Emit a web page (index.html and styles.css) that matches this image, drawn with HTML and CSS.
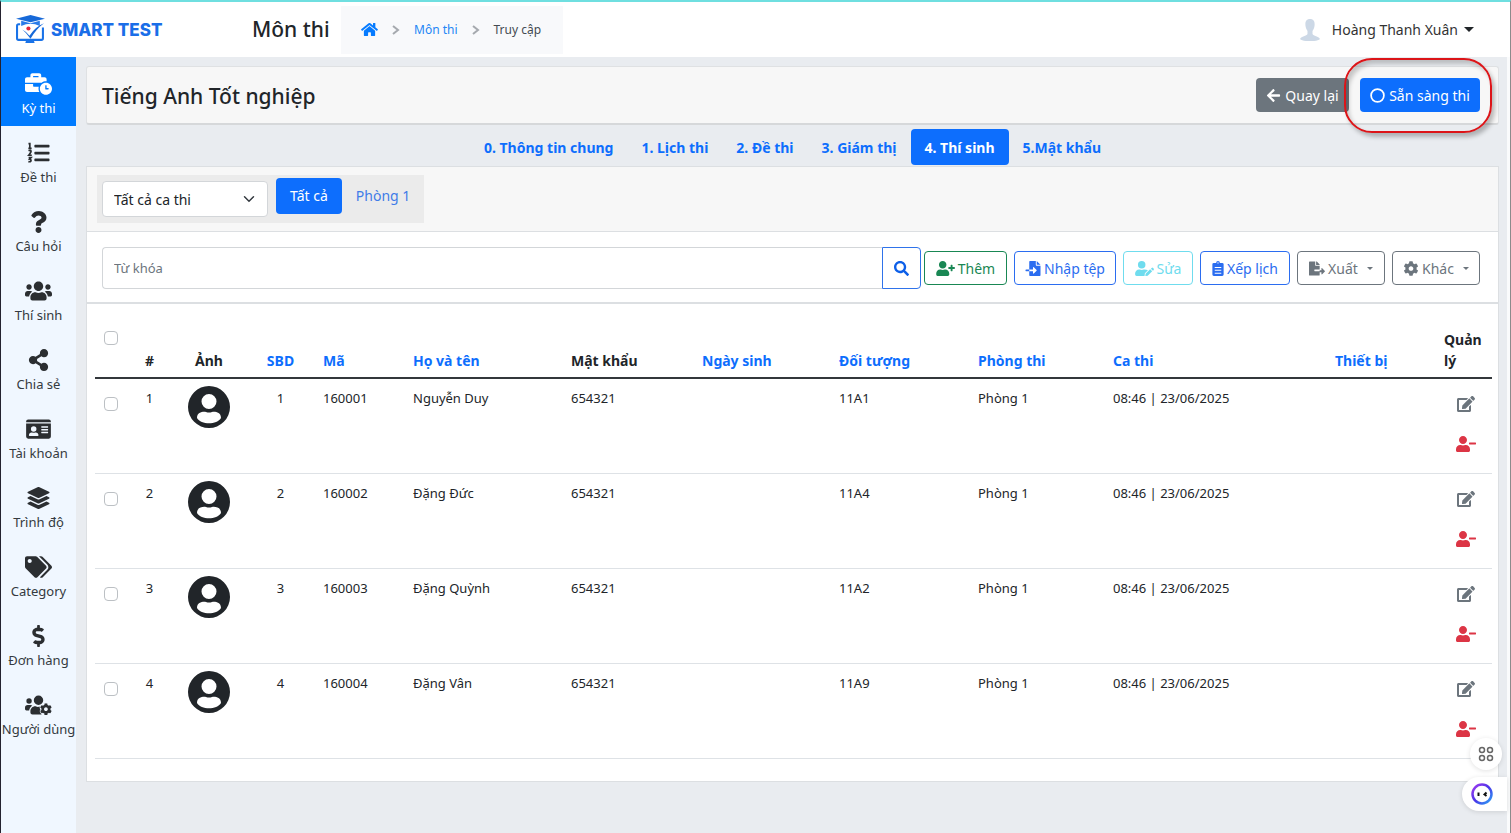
FILE: index.html
```html
<!DOCTYPE html>
<html lang="vi">
<head>
<meta charset="utf-8">
<title>Smart Test - Môn thi</title>
<link rel="stylesheet" href="styles.css">
</head>
<body>
<svg class="sprite" aria-hidden="true">
  <symbol id="i-home" viewBox="0 0 576 512"><path d="M280.37 148.26L96 300.11V464a16 16 0 0 0 16 16l112.06-.29a16 16 0 0 0 15.92-16V368a16 16 0 0 1 16-16h64a16 16 0 0 1 16 16v95.64a16 16 0 0 0 16 16.05L464 480a16 16 0 0 0 16-16V300L295.67 148.26a12.19 12.19 0 0 0-15.3 0zM571.6 251.47L488 182.56V44.05a12 12 0 0 0-12-12h-56a12 12 0 0 0-12 12v72.61L318.47 43a48 48 0 0 0-61 0L4.34 251.47a12 12 0 0 0-1.6 16.9l25.5 31A12 12 0 0 0 45.15 301l235.22-193.74a12.19 12.19 0 0 1 15.3 0L530.9 301a12 12 0 0 0 16.9-1.6l25.5-31a12 12 0 0 0-1.7-16.93z"/></symbol>
  <symbol id="i-business" viewBox="0 0 640 512"><path d="M496 224c-79.59 0-144 64.41-144 144s64.41 144 144 144 144-64.41 144-144-64.41-144-144-144zm64 150.29c0 5.34-4.37 9.71-9.71 9.71h-60.57c-5.34 0-9.71-4.37-9.71-9.71v-76.57c0-5.34 4.37-9.71 9.71-9.71h12.57c5.34 0 9.71 4.37 9.71 9.71V352h38.29c5.34 0 9.71 4.37 9.71 9.71v12.58zM496 192c5.4 0 10.72.33 16 .81V144c0-25.6-22.4-48-48-48h-80V48c0-25.6-22.4-48-48-48H176c-25.6 0-48 22.4-48 48v48H48c-25.6 0-48 22.4-48 48v80h395.12c28.6-20.09 63.35-32 100.88-32zM320 96H192V64h128v32zm6.82 224H208c-8.84 0-16-7.16-16-16v-48H0v144c0 25.6 22.4 48 48 48h291.43C327.1 423.96 320 396.82 320 368c0-16.66 2.48-32.72 6.82-48z"/></symbol>
  <symbol id="i-list" viewBox="0 0 512 512"><path d="M176 64h320a16 16 0 0 1 16 16v32a16 16 0 0 1-16 16H176a16 16 0 0 1-16-16V80a16 16 0 0 1 16-16zm0 160h320a16 16 0 0 1 16 16v32a16 16 0 0 1-16 16H176a16 16 0 0 1-16-16v-32a16 16 0 0 1 16-16zm0 160h320a16 16 0 0 1 16 16v32a16 16 0 0 1-16 16H176a16 16 0 0 1-16-16v-32a16 16 0 0 1 16-16z"/><path fill="none" stroke="currentColor" stroke-width="40" d="M22 40h32v102M20 146h76M24 206q46-24 58 4 8 22-52 98h70M26 362h56l-32 36q34 4 32 34-4 38-62 24"/></symbol>
  <symbol id="i-question" viewBox="0 0 384 512"><path d="M202.021 0C122.202 0 70.503 32.703 29.914 91.026c-7.363 10.58-5.093 25.086 5.178 32.874l43.138 32.709c10.373 7.865 25.132 6.026 33.253-4.148 25.049-31.381 43.63-49.449 82.757-49.449 30.764 0 68.816 19.799 68.816 49.631 0 22.552-18.617 34.134-48.993 51.164-35.423 19.86-82.299 44.576-82.299 106.405V320c0 13.255 10.745 24 24 24h72.471c13.255 0 24-10.745 24-24v-5.773c0-42.86 125.268-44.645 125.268-160.627C377.504 66.256 286.902 0 202.021 0zM192 373.459c-38.196 0-69.271 31.075-69.271 69.271 0 38.195 31.075 69.27 69.271 69.27s69.271-31.075 69.271-69.271-31.075-69.27-69.271-69.27z"/></symbol>
  <symbol id="i-users" viewBox="0 0 640 512"><path d="M96 224c35.3 0 64-28.7 64-64s-28.7-64-64-64-64 28.7-64 64 28.7 64 64 64zm448 0c35.3 0 64-28.7 64-64s-28.7-64-64-64-64 28.7-64 64 28.7 64 64 64zm32 32h-64c-17.6 0-33.5 7.1-45.1 18.6 40.3 22.1 68.9 62 75.1 109.4h66c17.7 0 32-14.3 32-32v-32c0-35.3-28.7-64-64-64zm-256 0c61.9 0 112-50.1 112-112S381.9 32 320 32 208 82.1 208 144s50.1 112 112 112zm76.8 32h-8.3c-20.8 10-43.9 16-68.5 16s-47.6-6-68.5-16h-8.3C179.6 288 128 339.6 128 403.2V432c0 26.5 21.5 48 48 48h288c26.5 0 48-21.5 48-48v-28.8c0-63.6-51.6-115.2-115.2-115.2zm-223.7-13.4C161.5 263.1 145.6 256 128 256H64c-35.3 0-64 28.7-64 64v32c0 17.7 14.3 32 32 32h65.9c6.3-47.4 34.9-87.3 75.2-109.4z"/></symbol>
  <symbol id="i-share" viewBox="0 0 448 512"><path d="M352 320c-22.608 0-43.387 7.819-59.79 20.895l-102.486-64.054a96.551 96.551 0 0 0 0-41.683l102.486-64.054C308.613 184.181 329.392 192 352 192c53.019 0 96-42.981 96-96S405.019 0 352 0s-96 42.981-96 96c0 7.158.79 14.13 2.276 20.841L155.79 180.895C139.387 167.819 118.608 160 96 160c-53.019 0-96 42.981-96 96s42.981 96 96 96c22.608 0 43.387-7.819 59.79-20.895l102.486 64.054A96.301 96.301 0 0 0 256 416c0 53.019 42.981 96 96 96s96-42.981 96-96-42.981-96-96-96z"/></symbol>
  <symbol id="i-card" viewBox="0 0 576 512"><path fill-rule="evenodd" d="M48 32h480a48 48 0 0 1 48 48v16H0V80a48 48 0 0 1 48-48zM0 128h576v304a48 48 0 0 1-48 48H48a48 48 0 0 1-48-48zM176 192a64 64 0 1 0 0 128 64 64 0 1 0 0-128zM64 403c0 7 7 13 16 13h192c9 0 16-6 16-13 0-37-28-67-64-67h-11a96 96 0 0 1-74 0h-11c-36 0-64 30-64 67zM352 200v16q0 8 8 8h144q8 0 8-8v-16q0-8-8-8H360q-8 0-8 8zM352 264v16q0 8 8 8h144q8 0 8-8v-16q0-8-8-8H360q-8 0-8 8zM352 328v16q0 8 8 8h144q8 0 8-8v-16q0-8-8-8H360q-8 0-8 8z"/></symbol>
  <symbol id="i-layers" viewBox="0 0 512 512"><path d="M12.41 148.02l232.94 105.67c6.8 3.09 14.49 3.09 21.29 0l232.94-105.67c16.55-7.51 16.55-32.52 0-40.03L266.65 2.31a25.607 25.607 0 0 0-21.29 0L12.41 107.98c-16.55 7.51-16.55 32.53 0 40.04zm487.18 88.28l-58.09-26.33-161.64 73.27c-7.56 3.43-15.59 5.17-23.86 5.17s-16.29-1.74-23.86-5.17L70.51 209.97l-58.1 26.33c-16.55 7.5-16.55 32.5 0 40l232.94 105.59c6.8 3.08 14.49 3.08 21.29 0L499.59 276.3c16.55-7.5 16.55-32.5 0-40zm0 127.8l-57.87-26.23-161.86 73.37c-7.56 3.43-15.59 5.17-23.86 5.17s-16.29-1.74-23.86-5.17L70.29 337.87 12.41 364.1c-16.55 7.5-16.55 32.5 0 40l232.94 105.59c6.8 3.08 14.49 3.08 21.29 0L499.59 404.1c16.55-7.5 16.55-32.5 0-40z"/></symbol>
  <symbol id="i-tags" viewBox="0 0 640 512"><path d="M497.941 225.941L286.059 14.059A48 48 0 0 0 252.118 0H48C21.49 0 0 21.49 0 48v204.118a48 48 0 0 0 14.059 33.941l211.882 211.882c18.744 18.745 49.136 18.746 67.882 0l204.118-204.118c18.745-18.745 18.745-49.137 0-67.882zM112 160c-26.51 0-48-21.49-48-48s21.49-48 48-48 48 21.49 48 48-21.49 48-48 48zm513.941 133.823L421.823 497.941c-18.745 18.745-49.137 18.745-67.882 0l-.36-.36L527.64 323.522c16.999-16.999 26.36-39.6 26.36-63.64s-9.362-46.641-26.36-63.64L331.397 0h48.721a48 48 0 0 1 33.941 14.059l211.882 211.882c18.745 18.745 18.745 49.137 0 67.882z"/></symbol>
  <symbol id="i-dollar" viewBox="0 0 288 512"><path d="M209.2 233.4l-108-31.6C88.7 198.2 80 186.5 80 173.5c0-16.3 13.2-29.5 29.5-29.5h66.3c12.2 0 24.2 3.7 34.2 10.5 6.1 4.1 14.3 3.1 19.5-2l34.8-34c7.1-6.9 6.1-18.4-1.8-24.5C238 74.8 207.4 64.1 176 64V16c0-8.800-7.2-16-16-16h-32c-8.800 0-16 7.200-16 16v48h-2.500C45.800 64-5.400 118.700.500 183.600c4.200 46.100 39.400 83.600 83.800 96.600l102.500 30c12.500 3.700 21.200 15.300 21.200 28.300 0 16.300-13.200 29.500-29.500 29.500h-66.300C100 368 88 364.300 78 357.500c-6.100-4.100-14.300-3.100-19.500 2l-34.800 34c-7.100 6.900-6.100 18.400 1.800 24.500 24.500 19.200 55.100 29.900 86.500 30v48c0 8.800 7.200 16 16 16h32c8.800 0 16-7.200 16-16v-48.200c46.600-.9 90.300-28.600 105.700-72.700 21.500-61.600-14.600-124.800-72.500-141.700z"/></symbol>
  <symbol id="i-cog" viewBox="0 0 512 512"><path d="M487.4 315.7l-42.6-24.6c4.3-23.2 4.3-47 0-70.2l42.6-24.6c4.9-2.8 7.1-8.6 5.5-14-11.1-35.6-30-67.8-54.7-94.600-3.800-4.100-10-5.100-14.800-2.300L380.800 110c-17.900-15.400-38.500-27.300-60.800-35.100V25.800c0-5.600-3.900-10.500-9.400-11.700-36.700-8.200-74.300-7.800-109.200 0-5.500 1.200-9.400 6.100-9.400 11.700V75c-22.200 7.900-42.800 19.800-60.800 35.100L88.700 85.500c-4.900-2.800-11-1.900-14.800 2.300-24.700 26.700-43.600 58.900-54.700 94.600-1.700 5.400.6 11.200 5.500 14L67.300 221c-4.300 23.200-4.300 47 0 70.200l-42.600 24.600c-4.900 2.800-7.100 8.600-5.500 14 11.100 35.600 30 67.800 54.700 94.600 3.800 4.100 10 5.100 14.800 2.300l42.600-24.600c17.900 15.400 38.500 27.300 60.800 35.100v49.200c0 5.600 3.900 10.500 9.400 11.700 36.700 8.200 74.300 7.800 109.200 0 5.500-1.200 9.400-6.100 9.400-11.700v-49.200c22.200-7.900 42.800-19.800 60.800-35.100l42.600 24.600c4.900 2.800 11 1.900 14.800-2.300 24.700-26.700 43.600-58.900 54.700-94.600 1.500-5.500-.7-11.300-5.600-14.100zM256 336c-44.100 0-80-35.900-80-80s35.900-80 80-80 80 35.900 80 80-35.900 80-80 80z"/></symbol>
  <symbol id="i-search" viewBox="0 0 512 512"><path d="M505 442.7L405.3 343c-4.500-4.500-10.600-7-17-7H372c27.600-35.300 44-79.700 44-128C416 93.100 322.900 0 208 0S0 93.100 0 208s93.100 208 208 208c48.300 0 92.700-16.400 128-44v16.300c0 6.400 2.500 12.500 7 17l99.700 99.700c9.400 9.400 24.600 9.400 33.900 0l28.300-28.300c9.400-9.400 9.400-24.600.1-34zM208 336c-70.700 0-128-57.200-128-128 0-70.700 57.200-128 128-128 70.700 0 128 57.200 128 128 0 70.700-57.200 128-128 128z"/></symbol>
  <symbol id="i-userbody" viewBox="0 0 640 512"><path d="M224 256c70.7 0 128-57.3 128-128S294.7 0 224 0 96 57.3 96 128s57.3 128 128 128zm89.6 32h-16.7c-22.2 10.2-46.9 16-72.9 16s-50.6-5.800-72.900-16h-16.700C60.200 288 0 348.200 0 422.400V464c0 26.500 21.500 48 48 48h352c26.500 0 48-21.500 48-48v-41.600c0-74.200-60.200-134.400-134.400-134.400z"/></symbol>
  <symbol id="i-userplus" viewBox="0 0 640 512"><use href="#i-userbody"/><path d="M624 208h-64v-64c0-8.800-7.200-16-16-16h-32c-8.800 0-16 7.200-16 16v64h-64c-8.800 0-16 7.200-16 16v32c0 8.800 7.200 16 16 16h64v64c0 8.800 7.200 16 16 16h32c8.800 0 16-7.200 16-16v-64h64c8.800 0 16-7.200 16-16v-32c0-8.800-7.200-16-16-16z"/></symbol>
  <symbol id="i-userminus" viewBox="0 0 640 512"><use href="#i-userbody"/><path d="M624 208H432c-8.800 0-16 7.200-16 16v32c0 8.800 7.200 16 16 16h192c8.800 0 16-7.200 16-16v-32c0-8.800-7.200-16-16-16z"/></symbol>
  <symbol id="i-useredit" viewBox="0 0 640 512"><path d="M224 256a128 128 0 1 0 0-256 128 128 0 0 0 0 256zm90 32h-17a174 174 0 0 1-146 0h-17C60 288 0 348 0 422v42a48 48 0 0 0 48 48h274l11-95 104-104c-30-17-70-25-123-25z"/><path d="M358 434l-8 68q0 12 11 10l68-8 153-153-71-71zM633 260l-33-33q-12-10-24 0l-38 38 71 71 25-26q15-25-1-50z"/></symbol>
  <symbol id="i-userscog" viewBox="0 0 640 512"><circle cx="96" cy="160" r="64"/><path d="M173 275C161 263 146 256 128 256H64a64 64 0 0 0-64 64v32a32 32 0 0 0 32 32h66c6-47 35-87 75-109z"/><path d="M320 256a112 112 0 1 0 0-224 112 112 0 0 0 0 224zm26 36q-40 20-94-4h-9c-63 0-115 52-115 115v29a48 48 0 0 0 48 48h220q-20-20-26-34-22-20-20-52 4-18 14-28-18-34-18-74z"/><svg x="352" y="212" width="288" height="288" viewBox="0 0 512 512"><use href="#i-cog"/></svg></symbol>
  <symbol id="i-edit" viewBox="0 0 576 512"><path d="M402.600 83.200l90.200 90.200c3.800 3.800 3.800 10 0 13.800L274.400 405.600l-92.800 10.300c-12.400 1.400-22.900-9.100-21.500-21.500l10.300-92.800L388.800 83.200c3.800-3.800 10-3.800 13.800 0zm162-22.900l-48.800-48.800c-15.200-15.200-39.900-15.200-55.200 0l-35.400 35.400c-3.800 3.800-3.800 10 0 13.800l90.200 90.200c3.800 3.800 10 3.800 13.800 0l35.400-35.400c15.200-15.300 15.200-40 0-55.200zM384 346.200V448H64V128h229.800c3.200 0 6.200-1.300 8.500-3.500l40-40c7.600-7.600 2.200-20.500-8.500-20.500H48C21.500 64 0 85.500 0 112v352c0 26.500 21.500 48 48 48h352c26.500 0 48-21.500 48-48V306.200c0-10.700-12.900-16-20.500-8.500l-40 40c-2.200 2.300-3.500 5.300-3.500 8.500z"/></symbol>
  <symbol id="i-back" viewBox="0 0 448 512"><path d="M257.500 445.100l-22.200 22.200c-9.400 9.400-24.600 9.400-33.900 0L7 273c-9.400-9.400-9.400-24.600 0-33.900L201.400 44.700c9.400-9.400 24.600-9.400 33.900 0l22.200 22.200c9.500 9.500 9.300 25-.4 34.300L136.600 216H424c13.300 0 24 10.700 24 24v32c0 13.300-10.700 24-24 24H136.600l120.500 114.800c9.800 9.300 10 24.800.4 34.300z"/></symbol>
  <symbol id="i-circle" viewBox="0 0 512 512"><path fill-rule="evenodd" d="M256 8a248 248 0 1 0 0 496 248 248 0 1 0 0-496zm0 60a188 188 0 1 1 0 376 188 188 0 1 1 0-376z"/></symbol>
  <symbol id="i-import" viewBox="0 0 512 512"><path fill-rule="evenodd" d="M16 288a16 16 0 0 0-16 16v32a16 16 0 0 0 16 16h112v-64zM384 0v128h128zM352 0H152a24 24 0 0 0-24 24v264h128v-65c0-14 17-21 27-11l95 96q8 12 0 24l-95 96c-10 10-27 3-27-12v-64H128v136a24 24 0 0 0 24 24h336a24 24 0 0 0 24-24V160H376a24 24 0 0 1-24-24z"/></symbol>
  <symbol id="i-export" viewBox="0 0 576 512"><path d="M384 121q0-10-7-17L280 7q-7-7-17-7h-7v128h128zm187 222l-95-96c-10-10-28-3-28 11v65h-64v64h64v65c0 14 18 21 28 11l95-96q10-12 0-24zM192 336v-32a16 16 0 0 1 16-16h176V160H248a24 24 0 0 1-24-24V0H24A24 24 0 0 0 0 24v464a24 24 0 0 0 24 24h336a24 24 0 0 0 24-24V352H208a16 16 0 0 1-16-16z"/></symbol>
  <symbol id="i-clipboard" viewBox="0 0 384 512"><path fill-rule="evenodd" d="M336 64h-80a64 64 0 0 0-128 0H48a48 48 0 0 0-48 48v352a48 48 0 0 0 48 48h288a48 48 0 0 0 48-48V112a48 48 0 0 0-48-48zM192 40a24 24 0 1 1 0 48 24 24 0 1 1 0-48zM80 205h224v34H80zM80 301h224v34H80zM80 397h224v34H80z"/></symbol>
  <symbol id="i-avatar" viewBox="0 0 42 42"><path fill-rule="evenodd" d="M21 0a21 21 0 1 0 0 42 21 21 0 1 0 0-42zm0 8a7.500 7.500 0 1 1 0 15 7.500 7.500 0 1 1 0-15zM9 32c0-6 6-6.500 9-6q3 1 6 0c3-.5 9 0 9 6-4 7-20 7-24 0z"/></symbol>
</svg>

<header class="topbar">
  <a class="brand" href="#">
    <svg class="brand-mark" viewBox="0 0 28 28" aria-hidden="true">
      <path d="M0 3.500 14 0l14 3.500L14 7z" fill="#1769d8"/><path d="M5 5.500v5q9-4 18 0v-5L14 8z" fill="#2a7be8"/>
      <path d="M4 9H2.500Q1 9 1 10.500v12Q1 24 2.500 24h22q1.500 0 1.500-1.500V12" fill="none" stroke="#1a73e8" stroke-width="2"/>
      <path d="M10 24h7l1 3H9z" fill="#1a73e8"/>
      <path d="M6 14q4 2 7 6 6-9 14-12-8 6-13 15Q10 17 6 14z" fill="#1769d8"/>
      <circle cx="12" cy="13" r="2" fill="#e5283b"/>
    </svg>
    <span>SMART TEST</span>
  </a>
  <h1 class="page-name">Môn thi</h1>
  <nav class="crumbs" aria-label="Breadcrumb">
    <a href="#" aria-label="Trang chủ"><svg class="home"><use href="#i-home"/></svg></a>
    <svg class="chev" viewBox="0 0 8 10"><path d="M1 1l5 4-5 4"/></svg>
    <a href="#">Môn thi</a>
    <svg class="chev" viewBox="0 0 8 10"><path d="M1 1l5 4-5 4"/></svg>
    <span>Truy cập</span>
  </nav>
  <button class="account" type="button">
    <svg class="face" viewBox="0 0 20 22" aria-hidden="true"><path d="M10 0c4 0 5 3 4.500 7-.5 3-1.500 4-2 5v3c1 2 6 2 7.500 5-3 3-17 3-20 0 1.500-3 6.500-3 7.500-5v-3c-.5-1-1.500-2-2-5C5 3 6 0 10 0z"/></svg>
    <span>Hoàng Thanh Xuân</span>
    <i class="caret big"></i>
  </button>
</header>

<div class="shell">
  <nav class="side" aria-label="Menu">
    <a class="on" href="#"><svg><use href="#i-business"/></svg>Kỳ thi</a>
    <a href="#"><svg><use href="#i-list"/></svg>Đề thi</a>
    <a href="#"><svg><use href="#i-question"/></svg>Câu hỏi</a>
    <a href="#"><svg><use href="#i-users"/></svg>Thí sinh</a>
    <a href="#"><svg><use href="#i-share"/></svg>Chia sẻ</a>
    <a href="#"><svg><use href="#i-card"/></svg>Tài khoản</a>
    <a href="#"><svg><use href="#i-layers"/></svg>Trình độ</a>
    <a href="#"><svg><use href="#i-tags"/></svg>Category</a>
    <a href="#"><svg><use href="#i-dollar"/></svg>Đơn hàng</a>
    <a href="#"><svg><use href="#i-userscog"/></svg>Người dùng</a>
  </nav>

  <main class="main">
    <section class="titlebar">
      <h2>Tiếng Anh Tốt nghiệp</h2>
      <button class="btn grey" type="button"><svg><use href="#i-back"/></svg>Quay lại</button>
      <div class="ready">
        <button class="btn blue" type="button"><svg><use href="#i-circle"/></svg>Sẵn sàng thi</button>
        <span class="ring"></span>
      </div>
    </section>

    <nav class="tabs" aria-label="Các bước">
      <a href="#">0. Thông tin chung</a>
      <a href="#">1. Lịch thi</a>
      <a href="#">2. Đề thi</a>
      <a href="#">3. Giám thị</a>
      <a class="on" href="#">4. Thí sinh</a>
      <a href="#">5.Mật khẩu</a>
    </nav>

    <section class="card">
      <div class="filters">
        <div class="filter-box">
          <select aria-label="Ca thi"><option>Tất cả ca thi</option></select>
          <a class="room on" href="#">Tất cả</a>
          <a class="room" href="#">Phòng 1</a>
        </div>
      </div>
      <div class="tools">
        <form class="search">
          <input type="text" placeholder="Từ khóa" aria-label="Từ khóa">
          <button type="button" aria-label="Tìm"><svg><use href="#i-search"/></svg></button>
        </form>
        <div class="actions">
          <button class="out green w-add" type="button"><svg class="wide"><use href="#i-userplus"/></svg>Thêm</button>
          <button class="out prim w-import" type="button"><svg><use href="#i-import"/></svg>Nhập tệp</button>
          <button class="out cyan w-edit" type="button" disabled><svg class="wide"><use href="#i-useredit"/></svg>Sửa</button>
          <button class="out prim w-plan" type="button"><svg class="slim"><use href="#i-clipboard"/></svg>Xếp lịch</button>
          <button class="out sec w-menu" type="button"><svg><use href="#i-export"/></svg>Xuất<i class="caret"></i></button>
          <button class="out sec w-menu" type="button"><svg><use href="#i-cog"/></svg>Khác<i class="caret"></i></button>
        </div>
      </div>

      <div class="table-wrap">
        <table>
          <colgroup><col class="c-check"><col class="c-no"><col class="c-img"><col class="c-sbd"><col class="c-code"><col class="c-name"><col class="c-pass"><col class="c-dob"><col class="c-group"><col class="c-room"><col><col class="c-device"><col class="c-manage"></colgroup>
          <thead>
            <tr><th class="pick"><input type="checkbox" aria-label="Chọn tất cả"></th><th class="mid">#</th><th class="mid">Ảnh</th><th class="mid"><a href="#">SBD</a></th><th><a href="#">Mã</a></th><th><a href="#">Họ và tên</a></th><th>Mật khẩu</th><th><a href="#">Ngày sinh</a></th><th><a href="#">Đối tượng</a></th><th><a href="#">Phòng thi</a></th><th><a href="#">Ca thi</a></th><th><a href="#">Thiết bị</a></th><th>Quản lý</th></tr>
          </thead>
          <tbody>
            <tr><td class="pick"><input type="checkbox" aria-label="Chọn 160001"></td><td class="mid">1</td><td class="mid"><svg class="avatar"><use href="#i-avatar"/></svg></td><td class="mid">1</td><td>160001</td><td>Nguyễn Duy</td><td>654321</td><td></td><td>11A1</td><td>Phòng 1</td><td>08:46 | 23/06/2025</td><td></td><td><div class="manage"><button type="button" aria-label="Sửa"><svg><use href="#i-edit"/></svg></button><button class="del" type="button" aria-label="Xóa"><svg><use href="#i-userminus"/></svg></button></div></td></tr>
            <tr><td class="pick"><input type="checkbox" aria-label="Chọn 160002"></td><td class="mid">2</td><td class="mid"><svg class="avatar"><use href="#i-avatar"/></svg></td><td class="mid">2</td><td>160002</td><td>Đặng Đức</td><td>654321</td><td></td><td>11A4</td><td>Phòng 1</td><td>08:46 | 23/06/2025</td><td></td><td><div class="manage"><button type="button" aria-label="Sửa"><svg><use href="#i-edit"/></svg></button><button class="del" type="button" aria-label="Xóa"><svg><use href="#i-userminus"/></svg></button></div></td></tr>
            <tr><td class="pick"><input type="checkbox" aria-label="Chọn 160003"></td><td class="mid">3</td><td class="mid"><svg class="avatar"><use href="#i-avatar"/></svg></td><td class="mid">3</td><td>160003</td><td>Đặng Quỳnh</td><td>654321</td><td></td><td>11A2</td><td>Phòng 1</td><td>08:46 | 23/06/2025</td><td></td><td><div class="manage"><button type="button" aria-label="Sửa"><svg><use href="#i-edit"/></svg></button><button class="del" type="button" aria-label="Xóa"><svg><use href="#i-userminus"/></svg></button></div></td></tr>
            <tr><td class="pick"><input type="checkbox" aria-label="Chọn 160004"></td><td class="mid">4</td><td class="mid"><svg class="avatar"><use href="#i-avatar"/></svg></td><td class="mid">4</td><td>160004</td><td>Đặng Vân</td><td>654321</td><td></td><td>11A9</td><td>Phòng 1</td><td>08:46 | 23/06/2025</td><td></td><td><div class="manage"><button type="button" aria-label="Sửa"><svg><use href="#i-edit"/></svg></button><button class="del" type="button" aria-label="Xóa"><svg><use href="#i-userminus"/></svg></button></div></td></tr>
          </tbody>
        </table>
      </div>
    </section>
  </main>
</div>

<div class="floating">
  <button class="apps" type="button" aria-label="Ứng dụng"><svg viewBox="0 0 16 16"><circle cx="4" cy="4" r="2.500"/><circle cx="12" cy="4" r="2.500"/><circle cx="4" cy="12" r="2.500"/><circle cx="12" cy="12" r="2.500"/></svg></button>
  <button class="bot" type="button" aria-label="Trợ lý">
    <svg viewBox="0 0 22 22"><defs><linearGradient id="g" x1="0" y1="0" x2="1" y2="1"><stop offset="0" stop-color="#a23bf0"/><stop offset=".5" stop-color="#4a35e8"/><stop offset="1" stop-color="#2aa5f5"/></linearGradient></defs><circle cx="11" cy="11" r="9.500" fill="#fff" stroke="url(#g)" stroke-width="2.500"/><path d="M7.500 9.500v3.500M15.500 9.500l-2 2 2 1.500" fill="none" stroke="#111" stroke-width="2"/></svg>
  </button>
</div>
</body>
</html>
```
FILE: styles.css
```css
* { box-sizing: border-box; }
body {
  margin: 0;
  min-height: 100vh;
  display: flex;
  flex-direction: column;
  background: #e9ecf0;
  border-left: 1px solid #24222f;
  border-right: 1px solid #8b8b8b;
  border-top: 2px solid #6fdfe0;
  color: #212529;
  font: 13px/21px "Noto Sans", "Open Sans", sans-serif;
}
a { color: #0d6efd; text-decoration: none; }
button, input, select { font: inherit; }
button { cursor: pointer; }
svg { fill: currentColor; flex: none; }
.sprite { position: absolute; width: 0; height: 0; }

.topbar {
  display: flex;
  align-items: center;
  height: 55px;
  background: #fff;
  padding-left: 15px;
  padding-right: 36px;
}
.brand { display: flex; align-items: center; gap: 6px; width: 236px; color: #1a6ee8; font: 800 17px/22px "Inter", sans-serif; }
.brand-mark { width: 29px; height: 29px; }
.page-name { margin: 0; width: 89px; padding-bottom: 2px; font-size: 21px; line-height: 28px; font-weight: 500; white-space: nowrap; }
.crumbs { display: flex; align-items: center; gap: 14px; height: 48px; padding: 0 22px 0 20px; background: #f8f9fb; font-size: 12px; color: #444b52; }
.crumbs a { display: flex; color: #2487f5; }
.home { width: 17px; height: 15px; color: #067bff; }
.chev { width: 8px; height: 10px; fill: none; stroke: #a5a9ae; stroke-width: 2; }
.account { margin-left: auto; display: flex; align-items: center; gap: 6px; padding: 0; border: 0; background: none; color: #333; font-size: 14px; }
.face { width: 20px; height: 22px; margin-right: 6px; color: #ccd8e6; }
.caret { border: 3px solid transparent; border-top-color: currentColor; border-bottom: 0; margin-left: 6px; }
.caret.big { border-width: 5px 5px 0; margin: 0; color: #212529; }

.shell { display: flex; flex: 1; }
.side { width: 75px; background: #f0f7ff; flex: none; }
.side a { display: flex; flex-direction: column; align-items: center; gap: 3px; height: 69px; padding-top: 16px; color: #343a40; white-space: nowrap; }
.side svg { width: 27px; height: 22px; color: #2b2e31; }
.side .on, .side .on svg { background: #007bff; color: #fff; }

.main { flex: 1; min-width: 0; padding: 9px 8px 0 10px; border-right: 3px solid #fafbfc; }
.titlebar { display: flex; align-items: center; height: 59px; padding: 0 18px 0 15px; background: #f7f7f7; border: 1px solid #dfe1e3; border-bottom: 2px solid #d6d8da; border-radius: 3px; }
.titlebar h2 { margin: 0 auto 0 0; padding-top: 2px; font-size: 21px; line-height: 28px; font-weight: 500; }
.btn { display: flex; align-items: center; justify-content: center; gap: 4px; height: 34px; padding: 0; border: 0; border-radius: 4px; color: #fff; font-size: 14px; white-space: nowrap; }
.btn svg { width: 15px; height: 15px; }
.btn.grey { background: #6c757d; width: 93px; }
.btn.blue { background: #0d6efd; width: 120px; }
.ready { position: relative; margin-left: 11px; }
.ring { position: absolute; inset: -20px -12px -21px -16px; border: 2px solid #dc1418; border-radius: 28px; box-shadow: 3px 4px 4px rgba(0, 0, 0, .25), inset 3px 4px 4px rgba(0, 0, 0, .2); pointer-events: none; }

.tabs { display: flex; justify-content: center; height: 41px; padding-top: 4px; }
.tabs a { height: 36px; padding: 0 14px; font-size: 14px; line-height: 38px; font-weight: 700; border-radius: 4px; }
.tabs .on { background: #0d6efd; color: #fff; }

.card { background: #fff; border: 1px solid #dcdfe2; padding-bottom: 22px; }
.filters { display: flex; background: #f7f7f7; padding: 8px 10px; border-bottom: 1px solid #dcdfe2; }
.filter-box { display: flex; background: #ebebeb; height: 48px; padding: 3px 0 0 5px; font-size: 14px; }
select {
  appearance: none;
  width: 166px; height: 36px; margin: 3px 8px 0 0; padding: 0 11px;
  border: 1px solid #d3d6d9; border-radius: 4px; color: #212529;
  background: #fff url("data:image/svg+xml,%3Csvg xmlns='http://www.w3.org/2000/svg' viewBox='0 0 16 16'%3E%3Cpath fill='none' stroke='%23343a40' stroke-width='2' stroke-linecap='round' d='m2 5 6 6 6-6'/%3E%3C/svg%3E") no-repeat right 12px center / 12px 12px;
}
.room { height: 36px; padding: 0 14px; line-height: 36px; border-radius: 4px; color: #3f7ce8; }
.room.on { background: #0d6efd; color: #fff; }

.tools { display: flex; align-items: center; gap: 3px; padding: 15px 18px 13px 15px; border-bottom: 2px solid #dcdfe2; }
.search { display: flex; flex: 1; height: 42px; }
.search input { flex: 1; min-width: 0; padding: 0 11px; border: 1px solid #d3d6d9; border-right: 0; border-radius: 4px 0 0 4px; }
.search input::placeholder { color: #6c757d; opacity: 1; }
.search button { display: flex; align-items: center; justify-content: center; width: 39px; padding: 0; background: #fff; border: 1px solid #2f73ea; border-radius: 0 4px 4px 0; color: #0d5fe8; }
.search svg { width: 15px; height: 15px; }
.actions { display: flex; gap: 7px; }
.out { display: flex; align-items: center; justify-content: center; gap: 3px; height: 34px; padding: 0; background: #fff; border: 1px solid currentColor; border-radius: 4px; font-size: 14px; white-space: nowrap; }
.out svg { width: 16px; height: 15px; }
.out .wide { width: 19px; }
.out .slim { width: 12px; }
.green { color: #198754; }
.prim { color: #2b6df0; }
.cyan { color: #6fdcee; }
.sec { color: #6c757d; }
.w-add { width: 83px; }
.w-import { width: 102px; }
.w-edit { width: 70px; }
.w-plan { width: 90px; }
.w-menu { width: 88px; }

.table-wrap { padding: 16px 6px 0 8px; }
table { width: 100%; table-layout: fixed; border-collapse: collapse; }
.c-check { width: 32px; } .c-no { width: 45px; } .c-img { width: 74px; } .c-sbd { width: 69px; }
.c-code { width: 90px; } .c-name { width: 158px; } .c-pass { width: 131px; } .c-dob { width: 137px; }
.c-group { width: 139px; } .c-room { width: 135px; } .c-device { width: 109px; } .c-manage { width: 56px; }
th, td { padding: 8px 0 8px 8px; text-align: left; vertical-align: top; }
th { vertical-align: bottom; padding-top: 9px; padding-bottom: 6px; border-bottom: 2px solid #33373b; font-size: 14px; }
td { height: 95px; padding-top: 9px; border-bottom: 1px solid #dee2e6; }
.mid { text-align: center; padding-left: 0; padding-right: 0; }
.pick input { display: block; appearance: none; width: 14px; height: 14px; margin: 0; border: 1px solid #bcc0c4; border-radius: 4px; background: #fff; }
th.pick { vertical-align: top; padding-top: 11px; }
td.pick { padding-top: 18px; padding-left: 9px; }
th.pick { padding-left: 9px; }
.avatar { display: block; width: 42px; height: 42px; margin: -2px auto 0; }
.manage { display: flex; flex-direction: column; gap: 24px; padding: 8px 5px 0 12px; }
.manage button { display: flex; padding: 0; border: 0; background: none; color: #6c757d; }
.manage svg { width: 20px; height: 16px; }
.manage .del { color: #dc3545; }

.floating { position: fixed; right: 4px; bottom: 22px; display: flex; flex-direction: column; align-items: flex-end; gap: 7px; }
.floating button { display: flex; align-items: center; border: 0; background: #fff; box-shadow: 0 1px 5px rgba(0, 0, 0, .12); }
.apps { justify-content: center; width: 32px; height: 32px; padding: 0; margin-right: 5px; border-radius: 50%; }
.apps svg { width: 16px; height: 16px; fill: none; stroke: #666; stroke-width: 1.5; }
.bot { width: 45px; height: 34px; padding: 0 9px; border-radius: 17px 0 0 17px; }
.bot svg { width: 22px; height: 22px; }
```
